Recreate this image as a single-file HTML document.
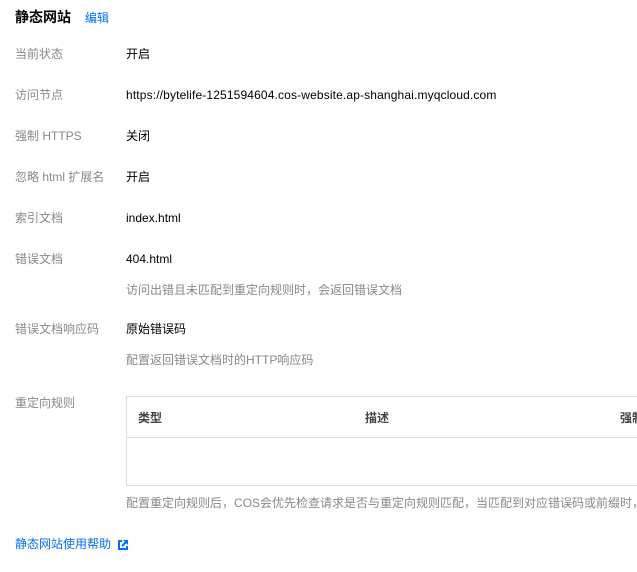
<!DOCTYPE html>
<html><head><meta charset="utf-8"><style>
body{margin:0;width:637px;height:572px;background:#fff;overflow:hidden;position:relative;font-family:"Liberation Sans","Noto Sans CJK SC",sans-serif;font-size:12px;color:#000}
.a{position:absolute;white-space:nowrap;line-height:16px}
.l{left:15px;color:#888}
.v{left:126px;color:#000}
.h{left:126px;color:#888}
</style></head><body>
<div class="a" style="left:15px;top:9px;font-size:14px;font-weight:bold;color:#000">静态网站</div>
<div class="a" style="left:85px;top:10px;color:#006eff">编辑</div>

<div class="a l" style="top:46px">当前状态</div><div class="a v" style="top:46px">开启</div>
<div class="a l" style="top:87px">访问节点</div><div class="a v" style="top:87px;letter-spacing:0.14px">https://bytelife-1251594604.cos-website.ap-shanghai.myqcloud.com</div>
<div class="a l" style="top:128px">强制 HTTPS</div><div class="a v" style="top:128px">关闭</div>
<div class="a l" style="top:169px">忽略 html 扩展名</div><div class="a v" style="top:169px">开启</div>
<div class="a l" style="top:210px">索引文档</div><div class="a v" style="top:210px">index.html</div>
<div class="a l" style="top:251px">错误文档</div><div class="a v" style="top:251px">404.html</div>
<div class="a h" style="top:282px">访问出错且未匹配到重定向规则时，会返回错误文档</div>
<div class="a l" style="top:321px">错误文档响应码</div><div class="a v" style="top:321px">原始错误码</div>
<div class="a h" style="top:352px">配置返回错误文档时的HTTP响应码</div>
<div class="a l" style="top:395px">重定向规则</div>

<div style="position:absolute;left:126px;top:396px;width:560px;height:88px;border:1px solid #ddd">
<div style="height:40px;border-bottom:1px solid #ddd;position:relative">
<div class="a" style="left:11px;top:13px;color:#444;font-weight:bold">类型</div>
<div class="a" style="left:238px;top:13px;color:#444;font-weight:bold">描述</div>
<div class="a" style="left:493px;top:13px;color:#444;font-weight:bold">强制</div>
</div></div>
<div class="a h" style="top:495px">配置重定向规则后，COS会优先检查请求是否与重定向规则匹配，当匹配到对应错误码或前缀时，</div>

<div class="a" style="left:15px;top:536px;color:#006eff">静态网站使用帮助</div>
<svg style="position:absolute;left:118px;top:540px" width="10" height="10" viewBox="0 0 10 10"><path d="M4 1H1v8h8V6" fill="none" stroke="#006eff" stroke-width="2"/><path d="M5 0h5v5z" fill="#006eff"/><path d="M8 2L4 6" stroke="#006eff" stroke-width="2"/></svg>
</body></html>
